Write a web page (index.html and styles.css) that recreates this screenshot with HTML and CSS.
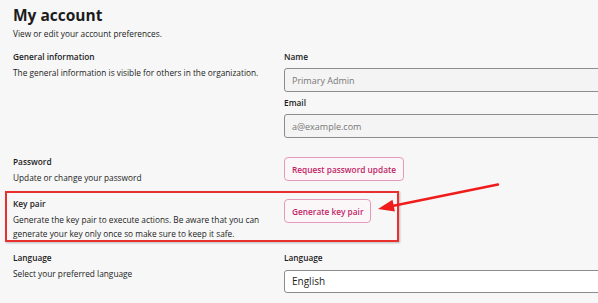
FILE: index.html
```html
<!DOCTYPE html>
<html lang="en">
<head>
  <meta charset="UTF-8">
  <title>My account</title>
  <link rel="stylesheet" href="styles.css">
</head>
<body>
  <div class="page">
    <h1 class="title">My account</h1>
    <p class="subtitle">View or edit your account preferences.</p>

    <div class="section general">
      <div class="info">
        <h2>General information</h2>
        <p>The general information is visible for others in the organization.</p>
      </div>
      <div class="fields">
        <label for="name">Name</label>
        <input type="text" id="name" class="field" placeholder="Primary Admin" readonly>
        <label for="email">Email</label>
        <input type="text" id="email" class="field" placeholder="a@example.com" readonly>
      </div>
    </div>

    <div class="section password">
      <div class="info">
        <h2>Password</h2>
        <p>Update or change your password</p>
      </div>
      <div class="fields">
        <button class="action">Request password update</button>
      </div>
    </div>

    <div class="section keypair">
      <div class="info">
        <h2>Key pair</h2>
        <p>Generate the key pair to execute actions. Be aware that you can generate your key only once so make sure to keep it safe.</p>
      </div>
      <div class="fields">
        <button class="action">Generate key pair</button>
      </div>
      <div class="highlight"></div>
      <svg class="arrow" width="130" height="34" viewBox="0 0 130 34">
        <line x1="123" y1="1.5" x2="16" y2="23.2" stroke="#f01c1c" stroke-width="2.4" stroke-linecap="round"/>
        <polygon points="3,26 17.5,16.8 19.9,28.6" fill="#f01c1c"/>
      </svg>
    </div>

    <div class="section language">
      <div class="info">
        <h2>Language</h2>
        <p>Select your preferred language</p>
      </div>
      <div class="fields">
        <label for="lang">Language</label>
        <div class="select" id="lang">English</div>
      </div>
    </div>
  </div>
</body>
</html>
```

FILE: styles.css
```css
body {
  margin: 0;
  background: #f7f7f7;
  font-family: 'Open Sans', 'Noto Sans', sans-serif;
  color: #1c1c1c;
  overflow: hidden;
}

.page {
  padding: 3px 0 0 13px;
  width: 700px;
}

.title {
  margin: 0;
  font-size: 15.5px;
  line-height: 24px;
  font-weight: 700;
}

.subtitle {
  margin: 1px 0 0;
  font-size: 8.3px;
  line-height: 12px;
}

.section {
  display: flex;
  position: relative;
}

.info {
  width: 271px;
  flex: none;
}

.info h2 {
  margin: 0 0 3px;
  font-size: 8.3px;
  line-height: 12px;
  font-weight: 600;
}

.info p {
  margin: 0;
  font-size: 8.3px;
  line-height: 14px;
  width: 255px;
}

.fields {
  width: 330px;
  display: flex;
  flex-direction: column;
  align-items: flex-start;
}

.fields label {
  font-size: 8.3px;
  line-height: 12px;
  font-weight: 600;
  margin-bottom: 5px;
}

.field {
  box-sizing: border-box;
  width: 100%;
  height: 24px;
  padding: 0 7px;
  border: 1px solid #8c8c8c;
  border-radius: 3px;
  background: #f4f4f4;
  font-family: inherit;
  font-size: 9px;
  margin-bottom: 5px;
}

.field::placeholder {
  color: #777;
}

.general {
  margin-top: 11px;
}

.password {
  margin-top: 13px;
}

.keypair {
  margin-top: 13px;
}

.language {
  margin-top: 11px;
}

.action {
  box-sizing: border-box;
  height: 24px;
  padding: 0 7px;
  margin-top: 1px;
  border: 1px solid #e39bbb;
  border-radius: 4px;
  background: #fbf7f9;
  color: #c21e66;
  font-family: inherit;
  font-size: 8.3px;
  font-weight: 600;
}

.select {
  box-sizing: border-box;
  width: 100%;
  height: 23px;
  padding: 0 7px;
  margin-top: 1px;
  border: 1px solid #8c8c8c;
  border-radius: 3px;
  background: #fff;
  font-size: 10px;
  line-height: 21px;
}

.highlight {
  position: absolute;
  left: -8px;
  top: -7px;
  width: 390px;
  height: 47px;
  border: 2px solid #e8302e;
  box-shadow: 1px 1px 2px rgba(0, 0, 0, 0.25);
}

.arrow {
  position: absolute;
  left: 362px;
  top: -15px;
}
```
